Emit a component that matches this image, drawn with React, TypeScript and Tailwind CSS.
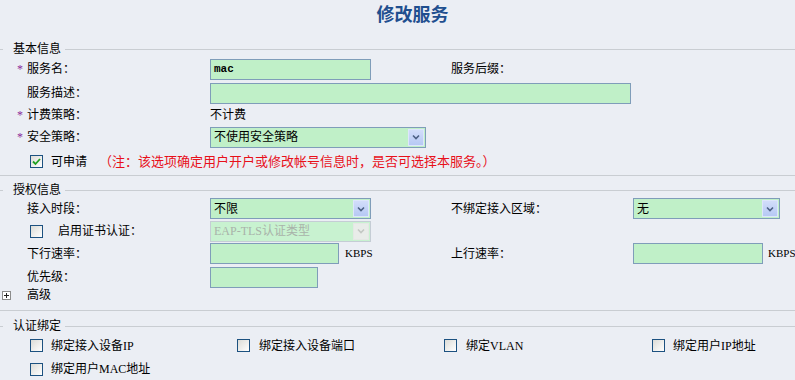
import React from "react";

type SelProps = {
  w: string;
  text: string;
  disabled?: boolean;
};

function Chevron({ color }: { color: string }) {
  return (
    <svg width="8" height="6" viewBox="0 0 8 6">
      <path d="M1 1.5 L4 4.5 L7 1.5" fill="none" stroke={color} strokeWidth="1.6" />
    </svg>
  );
}

function Select(props: SelProps) {
  if (props.disabled) {
    return (
      <div className={`flex h-[21px] ${props.w} items-center border border-[#c5cdd5] bg-[#c8f2d0]`}>
        <span className="flex-1 pl-[3px] text-[12px] text-[#a9b2aa]">{props.text}</span>
        <div className="mr-[1px] flex h-[17px] w-[16px] items-center justify-center border border-[#e4e8e4] bg-[#e9ece9]">
          <Chevron color="#c3c7c3" />
        </div>
      </div>
    );
  }
  return (
    <div className={`flex h-[21px] ${props.w} items-center border border-[#7f9db9] bg-[#c0f0c8]`}>
      <span className="flex-1 pl-[3px] text-[12px] text-black">{props.text}</span>
      <div className="mr-[1px] flex h-[17px] w-[16px] items-center justify-center border border-[#dde6fb] bg-gradient-to-b from-[#d2ddfa] to-[#b6c9f4]">
        <Chevron color="#4d6185" />
      </div>
    </div>
  );
}

function Box({ w }: { w: string }) {
  return <div className={`h-[21px] ${w} border border-[#7f9db9] bg-[#c0f0c8]`} />;
}

function Check({ checked }: { checked?: boolean }) {
  return (
    <div className="flex h-[13px] w-[13px] shrink-0 items-center justify-center border border-[#1c5180] bg-gradient-to-br from-[#dcdcd7] to-white">
      {checked && (
        <svg width="9" height="9" viewBox="0 0 9 9">
          <path d="M1 4.5 L3.5 7 L8 2" fill="none" stroke="#21a121" strokeWidth="1.8" />
        </svg>
      )}
    </div>
  );
}

function Legend({ title, cls }: { title: string; cls: string }) {
  return (
    <div className={`flex h-[14px] items-center ${cls}`}>
      <div className="h-px w-[3px] bg-[#c9cdd2]" />
      <span className="ml-[10px] mr-[4px] text-[12px] text-black">{title}</span>
      <div className="h-px flex-1 bg-[#c9cdd2]" />
    </div>
  );
}

function Label({ text, star }: { text: string; star?: boolean }) {
  return (
    <div className="flex items-center pl-[17px]">
      <span className="w-[10px] text-[12px] text-[#8a2c9c]">{star ? "*" : ""}</span>
      <span>{text}</span>
    </div>
  );
}

const row = "grid grid-cols-[210px_241px_182px_1fr] items-center";

export default function App() {
  return (
    <div className="h-[380px] w-[795px] overflow-hidden bg-[#ebeef4] font-['Liberation_Serif','Noto_Sans_CJK_SC',serif] text-[12px] text-black">
      <div className="flex h-[26px] items-center justify-center pl-[30px]">
        <h1 className="font-['Noto_Sans_CJK_SC',sans-serif] text-[18px] font-bold text-[#1f4f8f]">修改服务</h1>
      </div>

      {/* 基本信息 */}
      <div className="border-b border-[#c9cdd2]">
        <Legend title="基本信息" cls="mt-[16px]" />
        <div className={`${row} h-[26px]`}>
          <Label text="服务名：" star />
          <div className="flex h-[21px] w-[161px] items-center border border-[#7f9db9] bg-[#c0f0c8] pl-[3px]">
            <span className="font-['Liberation_Mono',monospace] text-[11px] font-bold">mac</span>
          </div>
          <span>服务后缀：</span>
          <div />
        </div>
        <div className={`${row} h-[22px]`}>
          <Label text="服务描述：" />
          <div className="col-span-3">
            <Box w="w-[421px]" />
          </div>
        </div>
        <div className={`${row} h-[22px]`}>
          <Label text="计费策略：" star />
          <span>不计费</span>
        </div>
        <div className={`${row} h-[22px]`}>
          <Label text="安全策略：" star />
          <Select w="w-[216px]" text="不使用安全策略" />
        </div>
        <div className="flex h-[27px] items-center pl-[30px]">
          <Check checked />
          <span className="ml-[8px]">可申请</span>
          <span className="ml-[12px] text-[13px] text-[#e8101a]">（注：该选项确定用户开户或修改帐号信息时，是否可选择本服务。）</span>
        </div>
      </div>

      {/* 授权信息 */}
      <div className="border-b border-[#c9cdd2] pb-[9px]">
        <Legend title="授权信息" cls="mt-[7px]" />
        <div className={`${row} h-[23px]`}>
          <Label text="接入时段：" />
          <Select w="w-[161px]" text="不限" />
          <span>不绑定接入区域：</span>
          <Select w="w-[147px]" text="无" />
        </div>
        <div className={`${row} h-[22px]`}>
          <div className="flex items-center pl-[30px]">
            <Check />
            <span className="ml-[15px]">启用证书认证：</span>
          </div>
          <Select w="w-[161px]" text="EAP-TLS认证类型" disabled />
        </div>
        <div className={`${row} h-[23px]`}>
          <Label text="下行速率：" />
          <div className="flex items-center">
            <Box w="w-[129px]" />
            <span className="ml-[6px] text-[11px]">KBPS</span>
          </div>
          <span>上行速率：</span>
          <div className="flex items-center">
            <Box w="w-[130px]" />
            <span className="ml-[5px] text-[11px]">KBPS</span>
          </div>
        </div>
        <div className={`${row} h-[24px]`}>
          <Label text="优先级：" />
          <Box w="w-[108px]" />
        </div>
        <div className="flex h-[12px] items-center">
          <div className="ml-[2px] flex h-[9px] w-[9px] items-center justify-center border border-[#8c8c8c] bg-white">
            <svg width="7" height="7" viewBox="0 0 7 7">
              <path d="M1 3.5 H6 M3.5 1 V6" stroke="#222" strokeWidth="1" />
            </svg>
          </div>
          <span className="ml-[16px]">高级</span>
        </div>
      </div>

      {/* 认证绑定 */}
      <Legend title="认证绑定" cls="mt-[8px]" />
      <div className="grid h-[25px] grid-cols-[207px_207px_208px_1fr] items-center pl-[30px]">
        <div className="flex items-center">
          <Check />
          <span className="ml-[8px]">绑定接入设备IP</span>
        </div>
        <div className="flex items-center">
          <Check />
          <span className="ml-[9px]">绑定接入设备端口</span>
        </div>
        <div className="flex items-center">
          <Check />
          <span className="ml-[9px]">绑定VLAN</span>
        </div>
        <div className="flex items-center">
          <Check />
          <span className="ml-[8px]">绑定用户IP地址</span>
        </div>
      </div>
      <div className="flex h-[22px] items-center pl-[30px]">
        <Check />
        <span className="ml-[8px]">绑定用户MAC地址</span>
      </div>
    </div>
  );
}
